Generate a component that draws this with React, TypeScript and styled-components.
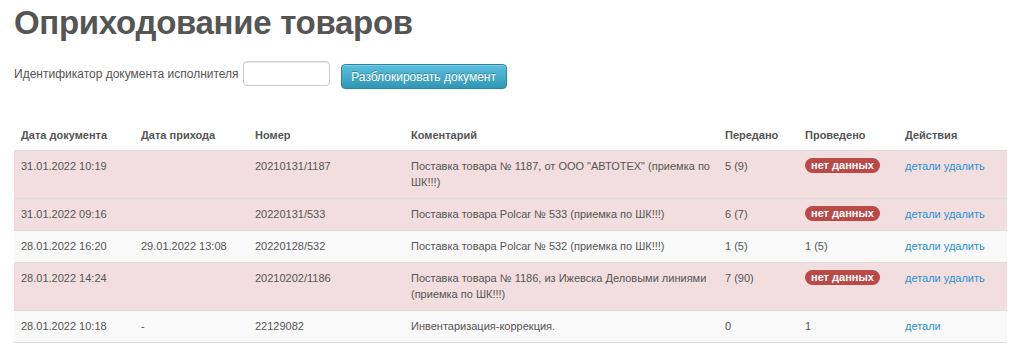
import * as React from 'react';
import styled, { createGlobalStyle } from 'styled-components';

const GlobalStyle = createGlobalStyle`
  body {
    margin: 0;
    background: #fff;
    font-family: 'Liberation Sans', Arial, sans-serif;
    color: #555;
  }
`;

const Page = styled.div`
  padding: 0 17px 0 14px;
`;

const Title = styled.h1`
  margin: 1px 0 0;
  font-size: 33px;
  line-height: 44px;
  letter-spacing: -0.3px;
  font-weight: bold;
  color: #555;
`;

const FormRow = styled.div`
  display: flex;
  align-items: flex-start;
  margin-top: 16px;
  font-size: 12px;
`;

const Label = styled.label`
  line-height: 16px;
  margin-top: 5px;
  margin-right: 4px;
`;

const Input = styled.input`
  box-sizing: border-box;
  width: 87px;
  height: 25px;
  border: 1px solid #ccc;
  border-radius: 4px;
  box-shadow: inset 0 1px 1px rgba(0, 0, 0, 0.075);
  padding: 2px 5px;
  outline: none;
`;

const Button = styled.button`
  box-sizing: border-box;
  margin-left: 11px;
  margin-top: 3px;
  width: 166px;
  height: 25px;
  border: 1px solid #2a86a3;
  border-radius: 4px;
  background: linear-gradient(#5bc0de, #2f96b4);
  color: #fff;
  font-family: inherit;
  font-size: 12px;
  padding: 0 8px;
  text-shadow: 0 -1px 0 rgba(0, 0, 0, 0.25);
  box-shadow: inset 0 1px 0 rgba(255, 255, 255, 0.2), 0 1px 2px rgba(0, 0, 0, 0.05);
`;

const Table = styled.table`
  margin-top: 31px;
  width: 993px;
  border-collapse: collapse;
  table-layout: fixed;
  font-size: 11px;
  line-height: 16px;
`;

const Th = styled.th`
  text-align: left;
  font-weight: bold;
  padding: 7px 7px 7px;
  color: #555;
`;

const Row = styled.tr<{ $error?: boolean }>`
  background: ${p => (p.$error ? '#f2dede' : '#f9f9f9')};
`;

const Td = styled.td`
  padding: 7px 7px 8px;
  vertical-align: top;
  border-top: 1px solid #ddd;
  border-bottom: 1px solid #ddd;
`;

const Badge = styled.span`
  display: inline-block;
  background: #b94a48;
  color: #fff;
  font-weight: bold;
  font-size: 11px;
  line-height: 15px;
  padding: 0 6px;
  border-radius: 8px;
  vertical-align: top;
`;

const Link = styled.a`
  color: #2a91d0;
  text-decoration: none;
  margin-right: 3px;
`;

type Doc = {
  date: string;
  arrival: string;
  number: string;
  comment: string;
  sent: string;
  posted: string | null;
  canDelete: boolean;
};

const docs: Doc[] = [
  {
    date: '31.01.2022 10:19',
    arrival: '',
    number: '20210131/1187',
    comment: 'Поставка товара № 1187, от ООО "АВТОТЕХ" (приемка по ШК!!!)',
    sent: '5 (9)',
    posted: null,
    canDelete: true,
  },
  {
    date: '31.01.2022 09:16',
    arrival: '',
    number: '20220131/533',
    comment: 'Поставка товара Polcar № 533 (приемка по ШК!!!)',
    sent: '6 (7)',
    posted: null,
    canDelete: true,
  },
  {
    date: '28.01.2022 16:20',
    arrival: '29.01.2022 13:08',
    number: '20220128/532',
    comment: 'Поставка товара Polcar № 532 (приемка по ШК!!!)',
    sent: '1 (5)',
    posted: '1 (5)',
    canDelete: true,
  },
  {
    date: '28.01.2022 14:24',
    arrival: '',
    number: '20210202/1186',
    comment: 'Поставка товара № 1186, из Ижевска Деловыми линиями (приемка по ШК!!!)',
    sent: '7 (90)',
    posted: null,
    canDelete: true,
  },
  {
    date: '28.01.2022 10:18',
    arrival: '-',
    number: '22129082',
    comment: 'Инвентаризация-коррекция.',
    sent: '0',
    posted: '1',
    canDelete: false,
  },
];

export default function App() {
  return (
    <Page>
      <GlobalStyle />
      <Title>Оприходование товаров</Title>
      <FormRow>
        <Label>Идентификатор документа исполнителя</Label>
        <Input />
        <Button>Разблокировать документ</Button>
      </FormRow>
      <Table>
        <colgroup>
          <col style={{ width: 120 }} />
          <col style={{ width: 114 }} />
          <col style={{ width: 156 }} />
          <col style={{ width: 314 }} />
          <col style={{ width: 80 }} />
          <col style={{ width: 100 }} />
          <col />
        </colgroup>
        <thead>
          <tr>
            <Th>Дата документа</Th>
            <Th>Дата прихода</Th>
            <Th>Номер</Th>
            <Th>Коментарий</Th>
            <Th>Передано</Th>
            <Th>Проведено</Th>
            <Th>Действия</Th>
          </tr>
        </thead>
        <tbody>
          {docs.map(d => (
            <Row key={d.number} $error={d.posted === null}>
              <Td>{d.date}</Td>
              <Td>{d.arrival}</Td>
              <Td>{d.number}</Td>
              <Td>{d.comment}</Td>
              <Td>{d.sent}</Td>
              <Td>{d.posted ?? <Badge>нет данных</Badge>}</Td>
              <Td>
                <Link href="#">детали</Link>
                {d.canDelete && <Link href="#">удалить</Link>}
              </Td>
            </Row>
          ))}
        </tbody>
      </Table>
    </Page>
  );
}
